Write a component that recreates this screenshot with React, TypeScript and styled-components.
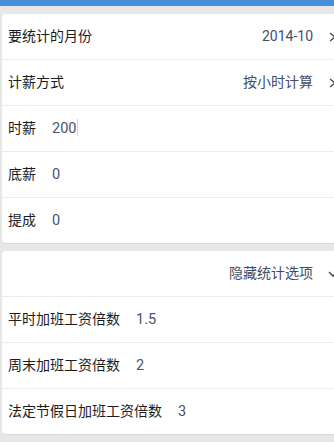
import styled, { createGlobalStyle } from "styled-components";

const GlobalStyle = createGlobalStyle`
  html, body {
    margin: 0;
    padding: 0;
    overflow: hidden;
    background: #e7e7e7;
  }
  body {
    font-family: Roboto, "Noto Sans CJK SC", "Noto Sans", sans-serif;
  }
`;

const Page = styled.div`
  width: 334px;
  height: 442px;
  overflow: hidden;
  background: #e7e7e7;
`;

const TopBar = styled.div`
  height: 6px;
  background: #4a8fdb;
`;

const Content = styled.div`
  display: flex;
  flex-direction: column;
  gap: 8px;
  padding: 8px 0 0 2px;
  width: 344px;
`;

const Card = styled.section`
  background: #fff;
  border-radius: 4px;
  box-shadow: 0 1px 1px rgba(0, 0, 0, 0.06);
  display: flex;
  flex-direction: column;
`;

const Row = styled.div<{ $first?: boolean }>`
  display: flex;
  align-items: baseline;
  height: 45px;
  line-height: 44px;
  padding: 0 8px 0 6px;
  border-top: ${(p) => (p.$first ? "none" : "1px solid #ececec")};
  font-size: 14px;
`;

const Label = styled.span`
  color: #1c1c1c;
  white-space: nowrap;
`;

const Spacer = styled.span`
  flex: 1;
`;

const SideValue = styled.span`
  color: #3f4d69;
  margin-right: 15px;
`;

const InputValue = styled.span`
  color: #46536e;
  margin-left: 16px;
  font-size: 14.5px;
`;

const Caret = styled.span`
  display: inline-block;
  width: 1px;
  height: 17px;
  margin-left: 1px;
  vertical-align: -3px;
  background: #c9d6ea;
`;

const ChevronBox = styled.span`
  align-self: center;
  display: flex;
`;

const Chevron = ({ down }: { down?: boolean }) => (
  <ChevronBox>
    <svg width="10" height="12" viewBox="0 0 10 12">
      <path
        d={down ? "M1 4 L5 8 L9 4" : "M2 2 L7 6 L2 10"}
        fill="none"
        stroke="#555"
        strokeWidth="1.6"
      />
    </svg>
  </ChevronBox>
);

export default function App() {
  return (
    <Page>
      <GlobalStyle />
      <TopBar />
      <Content>
        <Card>
          <Row $first>
            <Label>要统计的月份</Label>
            <Spacer />
            <SideValue>2014-10</SideValue>
            <Chevron />
          </Row>
          <Row>
            <Label>计薪方式</Label>
            <Spacer />
            <SideValue>按小时计算</SideValue>
            <Chevron />
          </Row>
          <Row>
            <Label>时薪</Label>
            <InputValue>
              200
              <Caret />
            </InputValue>
          </Row>
          <Row>
            <Label>底薪</Label>
            <InputValue>0</InputValue>
          </Row>
          <Row>
            <Label>提成</Label>
            <InputValue>0</InputValue>
          </Row>
        </Card>
        <Card>
          <Row $first>
            <Spacer />
            <SideValue>隐藏统计选项</SideValue>
            <Chevron down />
          </Row>
          <Row>
            <Label>平时加班工资倍数</Label>
            <InputValue>1.5</InputValue>
          </Row>
          <Row>
            <Label>周末加班工资倍数</Label>
            <InputValue>2</InputValue>
          </Row>
          <Row>
            <Label>法定节假日加班工资倍数</Label>
            <InputValue>3</InputValue>
          </Row>
        </Card>
      </Content>
    </Page>
  );
}
